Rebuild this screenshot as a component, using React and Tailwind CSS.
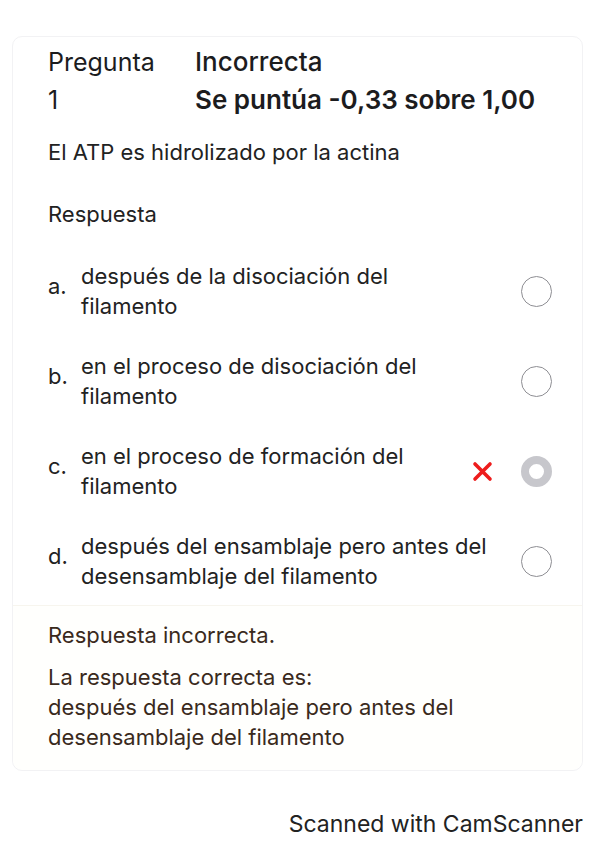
import React from 'react';

const options = [
  { letter: 'a.', text: ['después de la disociación del', 'filamento'] },
  { letter: 'b.', text: ['en el proceso de disociación del', 'filamento'] },
  { letter: 'c.', text: ['en el proceso de formación del', 'filamento'], chosen: true },
  { letter: 'd.', text: ['después del ensamblaje pero antes del', 'desensamblaje del filamento'] },
];

const Radio = ({ checked }) =>
  checked ? (
    <div className="w-[31px] h-[31px] rounded-full border-[8px] border-[#c7c7cc] bg-white" />
  ) : (
    <div className="w-[31px] h-[31px] rounded-full border-[1.5px] border-[#8e8e93] bg-white" />
  );

const Cross = () => (
  <svg width="21" height="21" viewBox="0 0 21 21">
    <path d="M3 3 L18 18 M18 3 L3 18" stroke="#ee1c1c" strokeWidth="3.6" strokeLinecap="round" />
  </svg>
);

export default function App() {
  return (
    <div className="min-h-[848px] w-[599px] bg-white text-[#1c1c1e] font-['Inter',sans-serif] flex flex-col">
      <div className="mt-[36px] ml-[12px] w-[571px] rounded-[10px] border border-[#f2f2f4] flex flex-col">
        {/* header */}
        <div className="pl-[35px] pt-[6px] flex">
          <div className="w-[147px] text-[25px] leading-[38px]">
            <div>Pregunta</div>
            <div>1</div>
          </div>
          <div>
            <div className="text-[26px] leading-[38px] font-medium">Incorrecta</div>
            <div className="text-[26px] leading-[38px] font-semibold">Se puntúa -0,33 sobre 1,00</div>
          </div>
        </div>

        <div className="pl-[35px] pt-[18px] text-[22px] leading-[30px] text-[#222]">
          El ATP es hidrolizado por la actina
        </div>

        <div className="pl-[35px] pt-[32px] text-[22px] leading-[30px] text-[#222]">Respuesta</div>

        <div className="flex flex-col pt-[32px] gap-[30px] text-[#222]">
          {options.map((o) => (
            <div key={o.letter} className="flex items-center pl-[35px] pr-[30px]">
              <div className="w-[33px] text-[22px] self-start pt-[10px] leading-[30px]">{o.letter}</div>
              <div className="flex-1 text-[22px] leading-[30px]">
                {o.text.map((t) => (
                  <div key={t}>{t}</div>
                ))}
              </div>
              {o.chosen && (
                <div className="mr-[28px]">
                  <Cross />
                </div>
              )}
              <Radio checked={o.chosen} />
            </div>
          ))}
        </div>

        <div className="mt-[14px] border-t border-[#f7f5ee] bg-[#fffffd] pl-[35px] pt-[14px] pb-[18px] text-[22px] leading-[30px] text-[#3a2a1c] rounded-b-[10px]">
          <div>Respuesta incorrecta.</div>
          <div className="mt-[12px]">La respuesta correcta es:</div>
          <div>después del ensamblaje pero antes del</div>
          <div>desensamblaje del filamento</div>
        </div>
      </div>

      <div className="mt-[38px] pr-[16px] text-right text-[23px] leading-[30px] text-[#222]">Scanned with CamScanner</div>
    </div>
  );
}
